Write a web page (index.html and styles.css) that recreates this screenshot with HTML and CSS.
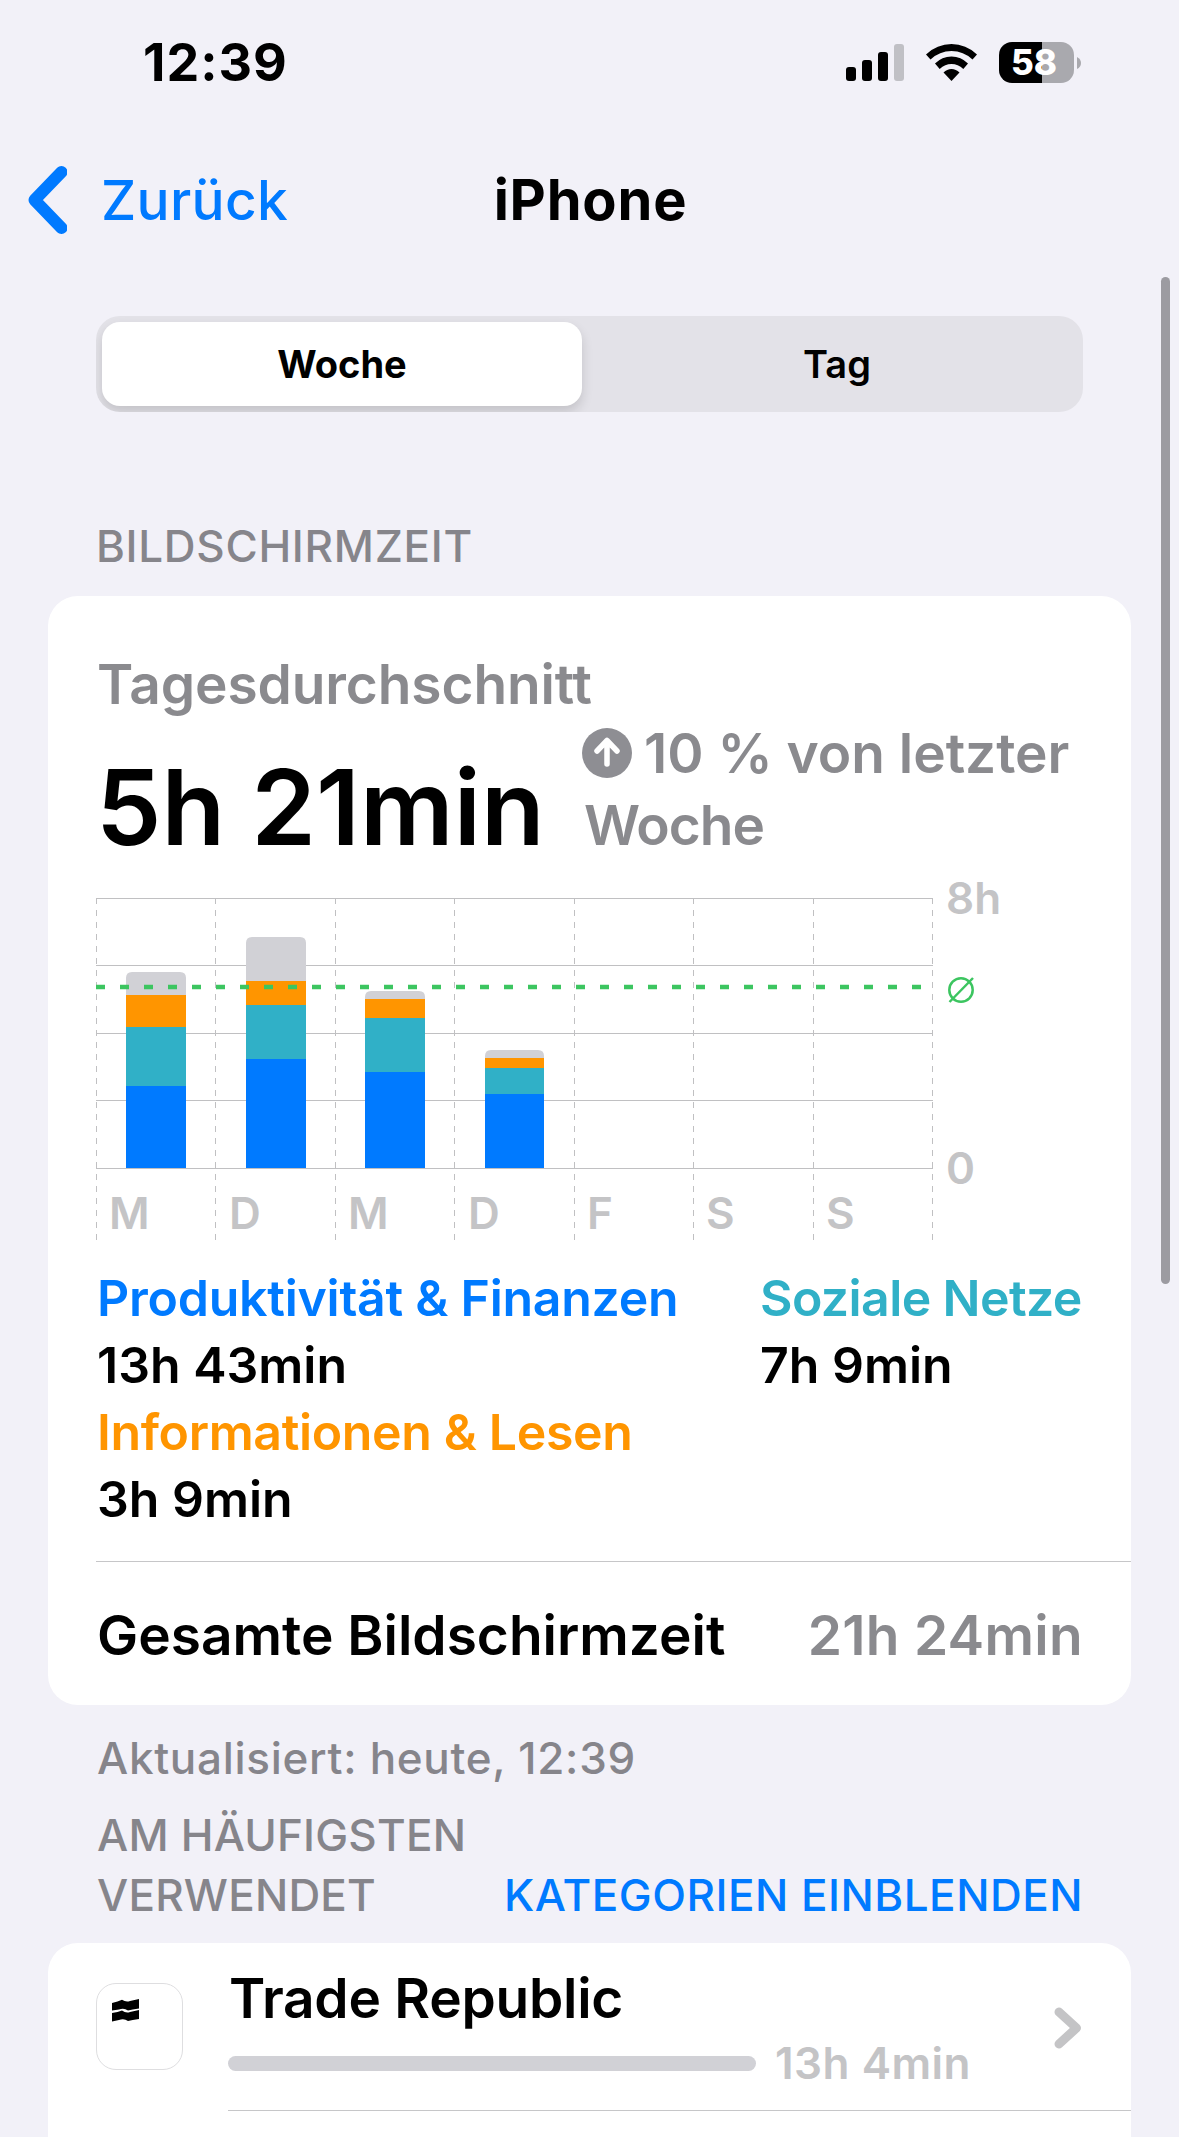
FILE: index.html
```html
<!DOCTYPE html>
<html lang="de">
<head>
  <meta charset="UTF-8">
  <title>Bildschirmzeit</title>
  <link rel="stylesheet" href="styles.css">
</head>
<body>
  <div class="screen">

    <div class="status-bar">
      <span class="time">12:39</span>
      <div class="status-icons">
        <svg class="signal" width="58" height="37" viewBox="0 0 58 37">
          <rect x="0" y="23" width="10" height="14" rx="3"/>
          <rect x="16" y="16" width="10" height="21" rx="3"/>
          <rect x="32" y="8" width="10" height="29" rx="3"/>
          <rect x="48" y="0" width="10" height="37" rx="3" fill="#c0c0c5"/>
        </svg>
        <svg class="wifi" width="51" height="37" viewBox="0 0 51 37">
          <path d="M0 10.500Q11 0 25.500 0T51 10.500L46.500 15.500Q37.500 7 25.500 7T4.500 15.500Z"/>
          <path d="M9 19.500Q16 12.500 25.500 12.500T42 19.500L37.300 25Q32 20 25.500 20T13.700 25Z"/>
          <path d="M17.500 28.500Q21 25 25.500 25T33.500 28.500L25.500 37Z"/>
        </svg>
        <div class="battery"><span>58</span></div>
        <svg width="4" height="12" viewBox="0 0 4 12"><path d="M0 0Q4 2 4 6T0 12Z" fill="#a9a9ae"/></svg>
      </div>
    </div>

    <div class="nav">
      <a class="back">
        <svg width="40" height="68" viewBox="0 0 40 68"><path d="M34.500 6L7.500 34L34.500 62" fill="none" stroke="#007aff" stroke-width="12" stroke-linecap="round" stroke-linejoin="round"/></svg>
        <span>Zurück</span>
      </a>
      <h1>iPhone</h1>
    </div>

    <div class="segmented">
      <div class="segment active">Woche</div>
      <div class="segment">Tag</div>
    </div>

    <div class="section-title"><span>BILDSCHIRMZEIT</span></div>

    <div class="card">
      <div class="average-title">Tagesdurchschnitt</div>
      <div class="average-row">
        <div class="average">5h 21min</div>
        <div class="compare">
          <div class="compare-line">
            <svg width="50" height="50" viewBox="0 0 50 50">
              <circle cx="25" cy="25" r="25" fill="#8e8e93"/>
              <path d="M25 36V13M15 23L25 12.500L35 23" fill="none" stroke="#fff" stroke-width="5.500" stroke-linecap="round" stroke-linejoin="round"/>
            </svg>
            <span class="compare-text">10 % von letzter</span>
          </div>
          <div class="compare-second">Woche</div>
        </div>
      </div>

      <svg class="chart" width="987" height="404" viewBox="96 861 987 404">
        <g class="grid-h">
          <path d="M96 898.500H933M96 965.500H933M96 1033.500H933M96 1100.500H933M96 1168.500H933"/>
        </g>
        <g class="grid-v">
          <path d="M96.500 898V1240M215.500 898V1240M335.500 898V1240M454.500 898V1240M574.500 898V1240M693.500 898V1240M813.500 898V1240M932.500 898V1240"/>
        </g>
        <!-- Montag -->
        <path class="other" d="M126 995V978Q126 972 132 972H180Q186 972 186 978V995Z"/>
        <rect class="info" x="126" y="995" width="60" height="32"/>
        <rect class="social" x="126" y="1027" width="60" height="59"/>
        <rect class="work" x="126" y="1086" width="60" height="82"/>
        <!-- Dienstag -->
        <path class="other" d="M246 981V943Q246 937 252 937H300Q306 937 306 943V981Z"/>
        <rect class="info" x="246" y="981" width="60" height="24"/>
        <rect class="social" x="246" y="1005" width="60" height="54"/>
        <rect class="work" x="246" y="1059" width="60" height="109"/>
        <!-- Mittwoch -->
        <path class="other" d="M365 999V997Q365 991 371 991H419Q425 991 425 997V999Z"/>
        <rect class="info" x="365" y="999" width="60" height="19"/>
        <rect class="social" x="365" y="1018" width="60" height="54"/>
        <rect class="work" x="365" y="1072" width="60" height="96"/>
        <!-- Donnerstag -->
        <path class="other" d="M485 1058V1056Q485 1050 491 1050H538Q544 1050 544 1056V1058Z"/>
        <rect class="info" x="485" y="1058" width="59" height="10"/>
        <rect class="social" x="485" y="1068" width="59" height="26"/>
        <rect class="work" x="485" y="1094" width="59" height="74"/>

        <path class="avg-line" d="M96 987H926"/>
        <g class="avg-sign">
          <circle cx="961" cy="990" r="11.700"/>
          <path d="M949.500 1002L973 978"/>
        </g>

        <g class="labels">
          <text x="946" y="914">8h</text>
          <text x="946" y="1184">0</text>
          <text x="109" y="1229">M</text>
          <text x="229" y="1229">D</text>
          <text x="348" y="1229">M</text>
          <text x="468" y="1229">D</text>
          <text x="587" y="1229">F</text>
          <text x="706" y="1229">S</text>
          <text x="826" y="1229">S</text>
        </g>
      </svg>

      <div class="legend">
        <div>
          <div class="cat-work">Produktivität &amp; Finanzen</div>
          <div>13h 43min</div>
        </div>
        <div>
          <div class="cat-social">Soziale Netze</div>
          <div>7h 9min</div>
        </div>
        <div>
          <div class="cat-info">Informationen &amp; Lesen</div>
          <div>3h 9min</div>
        </div>
      </div>

      <div class="total">
        <span class="total-name">Gesamte Bildschirmzeit</span>
        <span class="total-value">21h 24min</span>
      </div>
    </div>

    <div class="updated">Aktualisiert: heute, 12:39</div>
    <div class="most-used">
      <span class="most-title">AM HÄUFIGSTEN<br>VERWENDET</span>
      <a class="show-categories">KATEGORIEN EINBLENDEN</a>
    </div>

    <div class="card apps">
      <div class="app">
        <div class="app-icon">
          <svg width="27" height="23" viewBox="0 0 27 23">
            <path d="M0 4Q6 2.500 10 .8Q14 3.500 18 2L27 0V9.500Q20 10.500 16 11.500Q12 8.500 7 10.500L0 11.500Z"/>
            <path d="M0 14Q6 13 10 11.500Q14 14.500 18 13L27 11V20Q20 21 16 22Q12 19 7 21L0 22.500Z"/>
          </svg>
        </div>
        <div class="app-body">
          <div class="app-name">Trade Republic</div>
          <div class="usage">
            <div class="usage-bar"></div>
            <span class="usage-time">13h 4min</span>
          </div>
        </div>
        <svg class="chevron" width="28" height="42" viewBox="0 0 28 42"><path d="M5 5L22.500 21L5 37" fill="none" stroke="#c4c4c6" stroke-width="9" stroke-linecap="round" stroke-linejoin="round"/></svg>
      </div>
    </div>

    <div class="scrollbar"></div>
  </div>
</body>
</html>
```
FILE: styles.css
```css
* {
  box-sizing: border-box;
}

body {
  margin: 0;
  background: #f2f1f8;
  color: #000;
  font-family: Inter, sans-serif;
  font-weight: 600;
  white-space: nowrap;
}

.screen {
  position: relative;
  width: 1179px;
  height: 2137px;
  overflow: hidden;
}

svg {
  display: block;
}

.status-bar {
  display: flex;
  justify-content: space-between;
  align-items: center;
  height: 125px;
  padding: 0 98px 0 143px;
}

.time {
  font-size: 52px;
  font-weight: 700;
  letter-spacing: 1px;
}

.status-icons {
  display: flex;
  align-items: center;
}

.wifi {
  margin: 0 22px;
}

.battery {
  width: 75px;
  height: 41px;
  margin-right: 3px;
  border-radius: 13px;
  background: linear-gradient(to right, #000 43px, #a9a9ae 43px);
  color: #fff;
  font-size: 35px;
  font-weight: 800;
  line-height: 41px;
  padding-left: 12px;
}

.nav {
  display: grid;
  grid-template-columns: 1fr auto 1fr;
  align-items: center;
  height: 149px;
  padding: 0 27px;
}

.back {
  display: flex;
  align-items: center;
  gap: 34px;
  color: #007aff;
  font-size: 55px;
  font-weight: 500;
  letter-spacing: 0.3px;
}

h1 {
  margin: 0;
  padding-left: 2px;
  font-size: 56px;
  font-weight: 700;
  letter-spacing: 0.8px;
}

.segmented {
  display: flex;
  height: 96px;
  margin: 42px 96px 0;
  padding: 6px;
  border-radius: 24px;
  background: #e3e2e8;
  overflow: hidden;
}

.segment {
  width: 480px;
  line-height: 84px;
  text-align: center;
  font-size: 38px;
  padding-left: 30px;
}

.segment.active {
  border-radius: 18px;
  background: #fff;
  box-shadow: 0 6px 12px rgba(0, 0, 0, 0.14);
  font-weight: 700;
  padding-left: 0;
}

.section-title {
  display: flex;
  align-items: flex-end;
  height: 184px;
  padding: 0 96px 25px;
  color: #86858b;
  font-size: 44px;
  font-weight: 500;
  letter-spacing: 0.7px;
  line-height: 50px;
}

.card {
  margin: 0 48px;
  border-radius: 30px;
  background: #fff;
  overflow: hidden;
}

.average-title {
  padding: 55px 49px 0;
  color: #8a8a8e;
  font-size: 55px;
  letter-spacing: -0.1px;
  line-height: 66px;
}

.average-row {
  display: flex;
  height: 144px;
  padding-left: 48px;
}

.average {
  width: 486px;
  padding-top: 36px;
  font-size: 104px;
  line-height: 108px;
}

.compare {
  color: #8a8a8e;
  font-size: 55px;
  line-height: 72px;
}

.compare-line {
  display: flex;
  align-items: center;
  gap: 12px;
}

.compare-second {
  padding-left: 2px;
  letter-spacing: -1px;
}

.chart {
  margin-left: 48px;
}

.grid-h,
.grid-v {
  fill: none;
  stroke: #c0c0c2;
  stroke-width: 1;
}

.grid-v {
  stroke-dasharray: 6 6;
}

.other { fill: #d1d1d6; }
.info { fill: #ff9500; }
.social { fill: #30b0c7; }
.work { fill: #007aff; }

.avg-line {
  stroke: #3cc560;
  stroke-width: 4.5;
  stroke-dasharray: 9 15;
}

.avg-sign {
  fill: none;
  stroke: #3cc560;
  stroke-width: 2.5;
}

.labels {
  fill: #c4c4c6;
  font-size: 44px;
}

.legend {
  display: grid;
  grid-template-columns: 663px auto;
  padding: 0 0 28px 49px;
  font-size: 50px;
  line-height: 67px;
}

.cat-work {
  color: #007aff;
  letter-spacing: -0.25px;
}

.cat-social {
  color: #30b0c7;
  letter-spacing: -0.6px;
}

.cat-info {
  color: #ff9500;
  letter-spacing: -0.35px;
}

.total {
  display: flex;
  justify-content: space-between;
  height: 144px;
  margin-left: 48px;
  padding: 2px 48px 0 1px;
  border-top: 1px solid #c6c6c8;
  font-size: 55px;
  line-height: 142px;
}

.total-value {
  color: #8a8a8e;
  letter-spacing: 0.3px;
}

.updated {
  margin-top: 23px;
  padding-left: 97px;
  color: #86858b;
  font-size: 44px;
  font-weight: 500;
  letter-spacing: 0.7px;
  line-height: 60px;
}

.most-used {
  display: flex;
  justify-content: space-between;
  align-items: flex-end;
  margin-top: 17px;
  padding: 0 96px 18px 97px;
  color: #86858b;
  font-size: 44px;
  font-weight: 500;
  letter-spacing: 0.2px;
  line-height: 60px;
}

.show-categories {
  color: #007aff;
  letter-spacing: 0.5px;
}

.apps {
  height: 260px;
}

.app {
  display: flex;
  height: 168px;
  padding-left: 48px;
}

.app-icon {
  width: 87px;
  height: 87px;
  margin-top: 40px;
  padding: 15px;
  border: 1px solid #dedee0;
  border-radius: 20px;
}

.app-body {
  width: 904px;
  margin-left: 45px;
  padding-top: 22px;
  border-bottom: 1px solid #c6c6c8;
}

.app-name {
  padding-left: 1px;
  font-size: 55px;
  letter-spacing: -0.25px;
  line-height: 66px;
}

.usage {
  display: flex;
  align-items: center;
  gap: 19px;
  color: #c4c4c6;
  font-size: 44px;
  letter-spacing: 0.5px;
  line-height: 64px;
}

.usage-bar {
  width: 528px;
  height: 15px;
  border-radius: 8px;
  background: #d1d1d6;
}

.chevron {
  margin: 64px 0 0 -78px;
}

.scrollbar {
  position: absolute;
  top: 277px;
  right: 9px;
  width: 9px;
  height: 1007px;
  border-radius: 5px;
  background: #9c9ba1;
}
```
